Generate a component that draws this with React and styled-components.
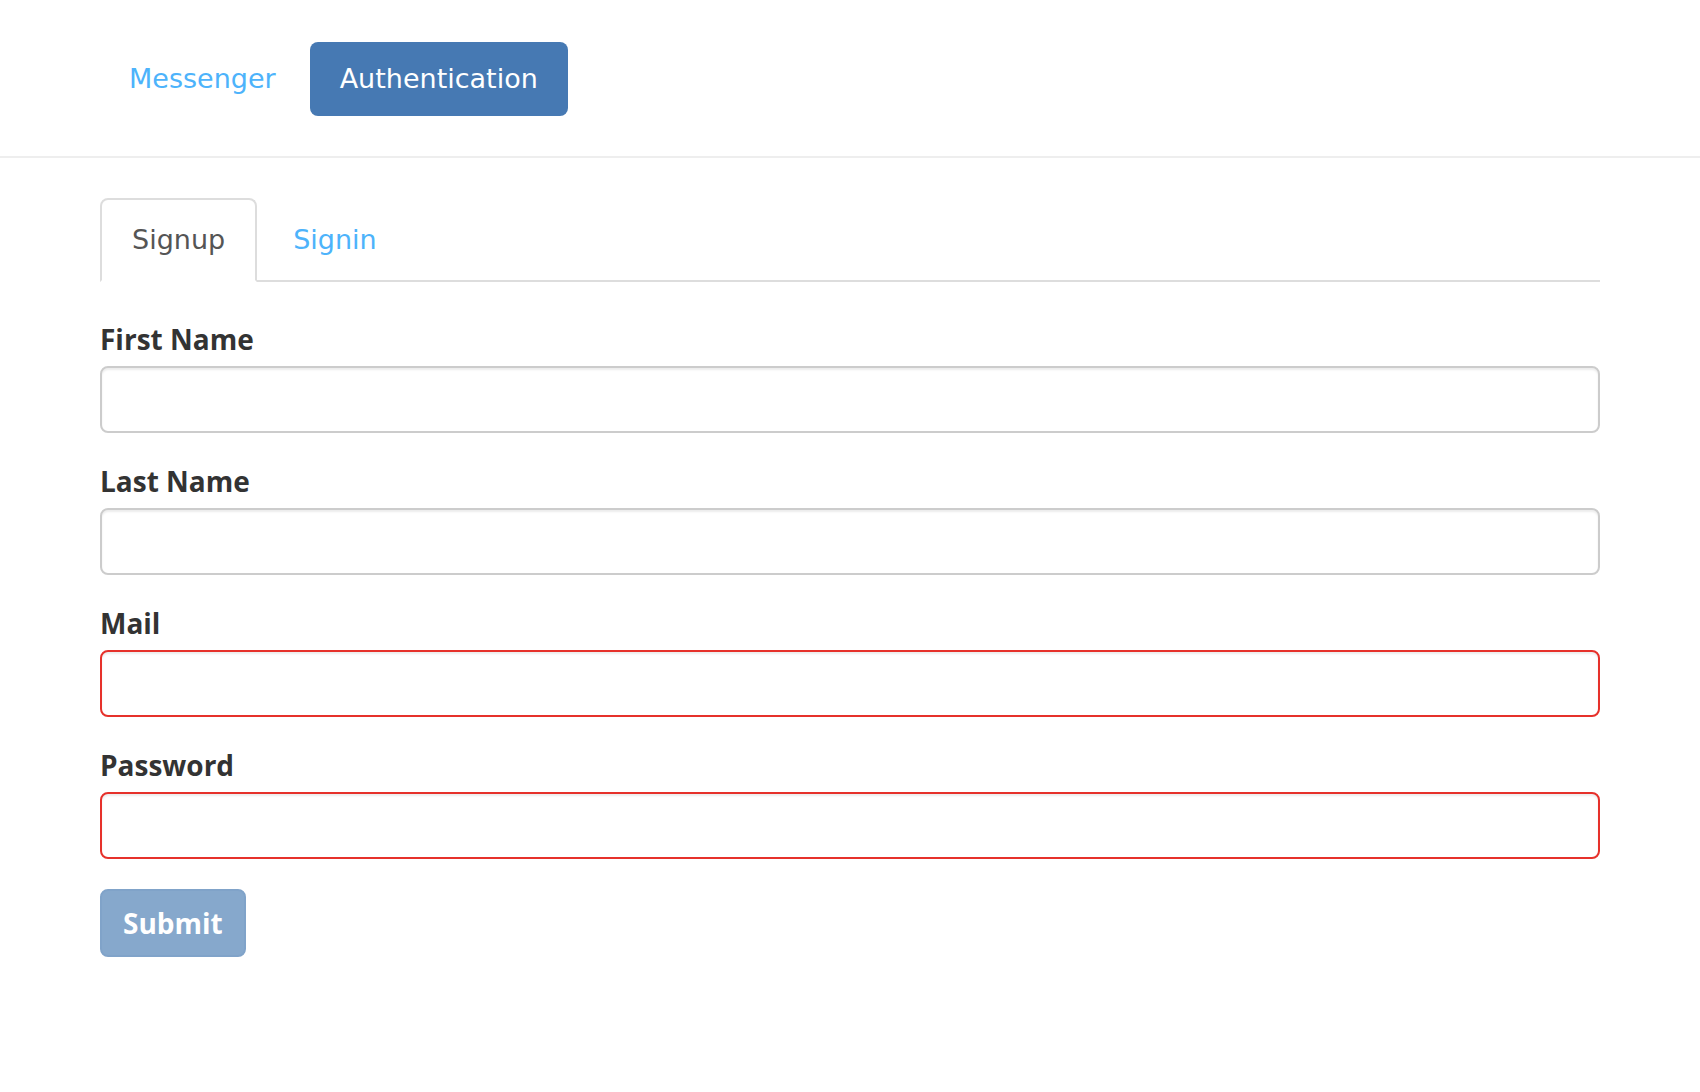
import styled, { createGlobalStyle } from 'styled-components';

const GlobalStyle = createGlobalStyle`
  html, body {
    margin: 0;
    padding: 0;
    background: #fff;
  }
  body {
    font-family: 'DejaVu Sans', 'Liberation Sans', sans-serif;
    color: #333;
  }
  * {
    box-sizing: border-box;
  }
`;

const Header = styled.header`
  display: flex;
  gap: 4px;
  padding: 42px 0 40px 99px;
  border-bottom: 2px solid #eee;
`;
const Pill = styled.a`
  display: block;
  height: 74px;
  padding: 0 30px;
  line-height: 74px;
  font-size: 27px;
  border-radius: 8px;
  text-decoration: none;
  cursor: pointer;
  color: ${(pr) => (pr.active ? '#fff' : '#4db3fb')};
  background: ${(pr) => (pr.active ? '#4679b3' : 'transparent')};
`;

const Main = styled.main`
  padding: 40px 100px 0;
`;
const Tabs = styled.ul`
  display: flex;
  gap: 4px;
  margin: 0;
  padding: 0;
  list-style: none;
  border-bottom: 2px solid #ddd;
`;
const Tab = styled.li`
  margin-bottom: -2px;
  padding: 20px 30px;
  font-size: 27px;
  line-height: 40px;
  border: 2px solid ${(pr) => (pr.active ? '#ddd' : 'transparent')};
  border-bottom-color: ${(pr) => (pr.active ? '#fff' : 'transparent')};
  border-radius: 8px 8px 0 0;
  background: ${(pr) => (pr.active ? '#fff' : 'transparent')};
  color: ${(pr) => (pr.active ? '#555' : '#4db3fb')};
  cursor: pointer;
`;

const Form = styled.form`
  display: flex;
  flex-direction: column;
  gap: 30px;
  margin-top: 39px;
`;
const Group = styled.div`
  display: flex;
  flex-direction: column;
`;
const Label = styled.label`
  display: block;
  margin-bottom: 9px;
  font-family: 'Open Sans', 'DejaVu Sans', sans-serif;
  font-size: 28px;
  line-height: 36px;
  font-weight: bold;
  color: #333;
`;
const Input = styled.input`
  display: block;
  width: 100%;
  height: 67px;
  padding: 12px 24px;
  font-size: 28px;
  font-family: inherit;
  color: #555;
  background: #fff;
  border: 2px solid ${(pr) => (pr.invalid ? '#e6312b' : '#ccc')};
  border-radius: 8px;
  box-shadow: inset 0 2px 2px rgba(0, 0, 0, 0.075);
  outline: none;
`;
const Submit = styled.button`
  align-self: flex-start;
  height: 68px;
  padding: 0 21px;
  font-family: 'Open Sans', 'DejaVu Sans', sans-serif;
  font-size: 28px;
  font-weight: bold;
  color: #fff;
  background: #86a8cc;
  border: 2px solid #80a3c9;
  border-radius: 8px;
  cursor: not-allowed;
`;

const fields = [
  { label: 'First Name', type: 'text', invalid: false },
  { label: 'Last Name', type: 'text', invalid: false },
  { label: 'Mail', type: 'email', invalid: true },
  { label: 'Password', type: 'password', invalid: true },
];

const App = () => {
  return (
    <>
      <GlobalStyle />
      <Header>
        <Pill>Messenger</Pill>
        <Pill active>Authentication</Pill>
      </Header>
      <Main>
        <Tabs>
          <Tab active>Signup</Tab>
          <Tab>Signin</Tab>
        </Tabs>
        <Form onSubmit={(e) => e.preventDefault()}>
          {fields.map((f) => (
            <Group key={f.label}>
              <Label>{f.label}</Label>
              <Input type={f.type} invalid={f.invalid} />
            </Group>
          ))}
          <Submit type="submit" disabled>
            Submit
          </Submit>
        </Form>
      </Main>
    </>
  );
};

export default App;
